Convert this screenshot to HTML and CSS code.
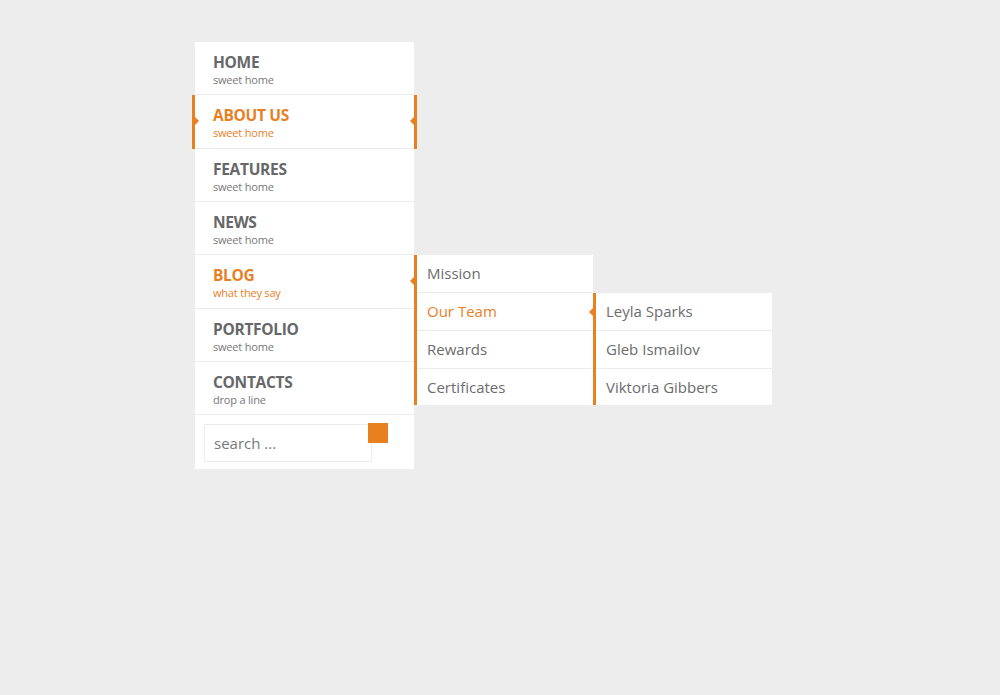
FILE: index.html
```html
<!DOCTYPE html>
<html lang="en">
<head>
<meta charset="utf-8">
<title>Menu</title>
<link rel="stylesheet" href="styles.css">
</head>
<body>
<div class="stage">
  <nav class="main-menu">
    <a class="item"><span class="title">HOME</span><span class="sub">sweet home</span></a>
    <a class="item active"><span class="title">ABOUT US</span><span class="sub">sweet home</span></a>
    <a class="item"><span class="title">FEATURES</span><span class="sub">sweet home</span></a>
    <a class="item"><span class="title">NEWS</span><span class="sub">sweet home</span></a>
    <a class="item open"><span class="title">BLOG</span><span class="sub">what they say</span></a>
    <a class="item"><span class="title">PORTFOLIO</span><span class="sub">sweet home</span></a>
    <a class="item"><span class="title">CONTACTS</span><span class="sub">drop a line</span></a>
    <div class="search">
      <input class="search-input" type="text" placeholder="search ...">
      <button class="search-btn" type="button" aria-label="search"></button>
    </div>
  </nav>
  <ul class="submenu level1">
    <li class="sub-item">Mission</li>
    <li class="sub-item open">Our Team</li>
    <li class="sub-item">Rewards</li>
    <li class="sub-item">Certificates</li>
  </ul>
  <ul class="submenu level2">
    <li class="sub-item">Leyla Sparks</li>
    <li class="sub-item">Gleb Ismailov</li>
    <li class="sub-item">Viktoria Gibbers</li>
  </ul>
</div>
</body>
</html>
```

FILE: styles.css
```css
html, body {
  margin: 0;
  padding: 0;
  background: #ededed;
  font-family: "Open Sans", "Noto Sans", sans-serif;
}

.stage {
  display: flex;
  align-items: flex-start;
  padding: 42px 0 0 195px;
}

.main-menu {
  width: 219px;
  background: #fff;
  display: flex;
  flex-direction: column;
}

.item {
  position: relative;
  display: flex;
  flex-direction: column;
  height: 52.33px;
  box-sizing: content-box;
  padding: 0 18px;
  border-bottom: 1px solid #ececec;
  color: #666769;
  text-decoration: none;
}

.item .title {
  font-size: 15.5px;
  font-weight: 700;
  line-height: 20px;
  margin-top: 10px;
  letter-spacing: -0.3px;
}

.item .sub {
  font-size: 11px;
  line-height: 15px;
  color: #77787a;
  letter-spacing: -0.2px;
}

.item.active .title,
.item.active .sub,
.item.open .title,
.item.open .sub {
  color: #e8801f;
}

.item.active::before {
  content: "";
  position: absolute;
  left: -3px;
  top: 0;
  bottom: -1px;
  width: 3px;
  background: #e8801f;
}

.item.active::after {
  content: "";
  position: absolute;
  right: -3px;
  top: 0;
  bottom: -1px;
  width: 3px;
  background: #e8801f;
}

.item.active .title::before {
  content: "";
  position: absolute;
  left: 0;
  top: 22px;
  border-style: solid;
  border-width: 4px 0 4px 4px;
  border-color: transparent transparent transparent #e8801f;
}

.item.active .title::after,
.item.open::after,
.sub-item.open::after {
  content: "";
  position: absolute;
  right: 0;
  top: 50%;
  margin-top: -4px;
  border-style: solid;
  border-width: 4px 4px 4px 0;
  border-color: transparent #e8801f transparent transparent;
}

.item.active .title::after {
  top: 22px;
  margin-top: 0;
}

.search {
  display: flex;
  align-items: flex-start;
  padding: 9px 0 7px 9px;
}

.search-input {
  width: 168px;
  height: 38px;
  box-sizing: border-box;
  border: 1px solid #ececec;
  padding: 0 9px;
  font-family: inherit;
  font-size: 15px;
  color: #77787a;
  outline: none;
}

.search-input::placeholder {
  color: #77787a;
}

.search-btn {
  width: 20px;
  height: 20px;
  margin: -1px 0 0 -4px;
  border: 0;
  padding: 0;
  background: #e8801f;
}

.submenu {
  list-style: none;
  margin: 0;
  padding: 0;
  width: 176px;
  background: #fff;
  border-left: 3px solid #e8801f;
}

.submenu.level1 {
  margin-top: 213px;
}

.submenu.level2 {
  margin-top: 251px;
}

.sub-item {
  position: relative;
  height: 37px;
  line-height: 37px;
  padding-left: 10px;
  font-size: 15px;
  color: #6b6c6e;
  border-bottom: 1px solid #ececec;
}

.sub-item:last-child {
  border-bottom: 0;
  height: 36px;
}

.sub-item.open {
  color: #e8801f;
}
```
